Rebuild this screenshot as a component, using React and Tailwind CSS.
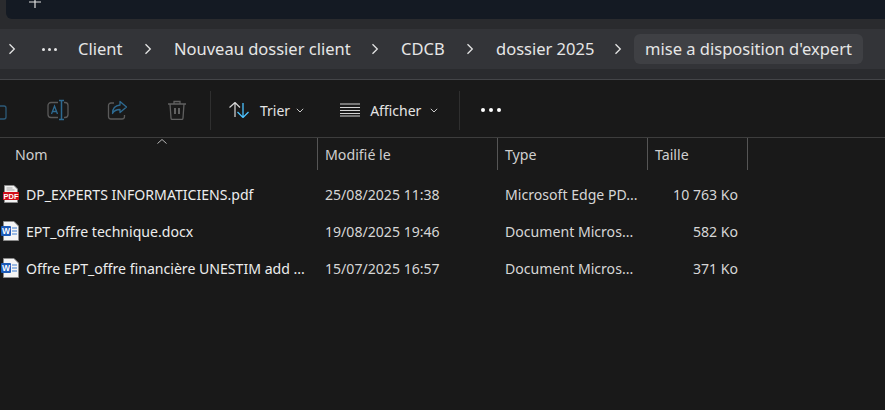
const font = { fontFamily: '"Noto Sans", sans-serif' };

function Chevron({ className = "" }) {
  return (
    <svg width="8" height="12" viewBox="0 0 8 12" fill="none" className={className}>
      <path d="M1.5 1.2 6.3 6 1.5 10.8" stroke="#e4e4e4" strokeWidth="1.3" />
    </svg>
  );
}

function Small({ className = "" }) {
  return (
    <svg width="8" height="5" viewBox="0 0 8 5" fill="none" className={className}>
      <path d="M.8.8 4 4 7.2.8" stroke="#c8c8c8" strokeWidth="1" />
    </svg>
  );
}

function PdfIcon() {
  return (
    <svg width="16" height="18" viewBox="0 0 16 18" className="ml-[2px]">
      <path d="M1.500.5h9.500l3.500 3.500v13.500H1.500z" fill="#f2f2f2" stroke="#8b8b8b" />
      <path d="M3.500 3h6M3.500 5h8" stroke="#a5a5a5" />
      <rect x="0" y="7" width="16" height="8" fill="#d00d1a" />
      <text x="8" y="13.600" textAnchor="middle" fontSize="7.500" fontWeight="700" fill="#fff" fontFamily="Liberation Sans, sans-serif">PDF</text>
    </svg>
  );
}

function WordIcon() {
  return (
    <svg width="18" height="20" viewBox="0 0 18 20">
      <path d="M2.500.5h10.500l4.500 4.500v14.500H2.500z" fill="#f5f5f5" stroke="#8b8b8b" />
      <path d="M11 7h5M11 10h5M11 13h5" stroke="#3f7fd1" strokeWidth="1.200" />
      <rect x="0" y="5" width="10" height="10" rx="1" fill="#1d5bb8" />
      <text x="5" y="13.200" textAnchor="middle" fontSize="8.500" fontWeight="700" fill="#fff" fontFamily="Liberation Sans, sans-serif">W</text>
    </svg>
  );
}

const crumbs = [
  ["Client", "w-[96px]"],
  ["Nouveau dossier client", "w-[227px]"],
  ["CDCB", "w-[95px]"],
  ["dossier 2025", "w-[148px]"],
];

const files = [
  { name: "DP_EXPERTS INFORMATICIENS.pdf", date: "25/08/2025 11:38", type: "Microsoft Edge PD...", size: "10 763 Ko", pdf: true },
  { name: "EPT_offre technique.docx", date: "19/08/2025 19:46", type: "Document Micros...", size: "582 Ko" },
  { name: "Offre EPT_offre financière UNESTIM add ...", date: "15/07/2025 16:57", type: "Document Micros...", size: "371 Ko" },
];

export default function App() {
  return (
    <div className="w-[885px] h-[410px] overflow-hidden bg-[#191919] text-[#e8e8e8]" style={font}>
      <div className="h-[19px] bg-[#2a2b2e] pl-[6px]">
        <div className="h-full bg-[#141a23] rounded-bl-[6px] overflow-hidden relative">
          <svg width="12" height="12" viewBox="0 0 12 12" className="absolute left-[23px] -top-[4px]">
            <path d="M6 0v12M0 6h12" stroke="#e0e0e0" strokeWidth="1.200" />
          </svg>
        </div>
      </div>

      <div className="h-[61px] bg-[#2a2b2e] pt-[10px] border-b border-[#444548]">
        <div className="h-[40px] bg-[#333438] flex items-center text-[16.5px] text-[#e6e6e6]">
          <Chevron className="ml-[8px] mr-[26px]" />
          <span className="w-[36px] flex gap-[3px] items-center">
            <i className="w-[3px] h-[3px] rounded-full bg-[#e6e6e6]" />
            <i className="w-[3px] h-[3px] rounded-full bg-[#e6e6e6]" />
            <i className="w-[3px] h-[3px] rounded-full bg-[#e6e6e6]" />
          </span>
          {crumbs.map(([label, w]) => (
            <span key={label} className={`${w} shrink-0 flex items-center justify-between pr-[22px] whitespace-nowrap`}>
              <span>{label}</span>
              <Chevron />
            </span>
          ))}
          <span className="ml-[-10px] h-[30px] w-[229px] flex items-center justify-center rounded-[6px] bg-[#3f4044] whitespace-nowrap">
            mise a disposition d'expert
          </span>
        </div>
      </div>

      <div className="h-[58px] pt-[3px] flex items-center border-b border-[#3d3d3d] text-[14px] text-[#e4e4e4]">
        <svg width="22" height="22" viewBox="0 0 22 22" fill="none" className="-ml-[12px] mr-[37px] shrink-0">
          <rect x="4" y="7" width="14" height="13" rx="2" stroke="#2d5a78" strokeWidth="1.300" />
        </svg>
        <svg width="22" height="22" viewBox="0 0 22 22" fill="none" className="mr-[38px] shrink-0">
          <path d="M11 3.500H4a3 3 0 0 0-3 3v9a3 3 0 0 0 3 3h7M17 3.500h1a3 3 0 0 1 3 3v9a3 3 0 0 1-3 3h-1" stroke="#5a5a5a" strokeWidth="1.300" />
          <path d="M4.500 15l3-8 3 8M5.500 12.500h4" stroke="#2e6a91" strokeWidth="1.300" />
          <path d="M12 1.500h5M14.500 1.500v19M12 20.500h5" stroke="#2e6a91" strokeWidth="1.500" />
        </svg>
        <svg width="20" height="20" viewBox="0 0 20 20" fill="none" className="mr-[41px] shrink-0">
          <path d="M7 3H4a2.500 2.500 0 0 0-2.500 2.500v11A2.500 2.500 0 0 0 4 19h11a2.500 2.500 0 0 0 2.500-2.500V15" stroke="#5a5a5a" strokeWidth="1.300" />
          <path d="M13 1.500 19.500 7 13 12.500V9.500c-3.500 0-6 1-7.500 4 0-5 3-8 7.500-8.500z" stroke="#2e6a91" strokeWidth="1.300" strokeLinejoin="round" />
        </svg>
        <svg width="18" height="20" viewBox="0 0 18 20" fill="none" className="mr-[24px] shrink-0">
          <path d="M0 4h18M6 4V1.500h6V4M2 4l1 14a1.500 1.500 0 0 0 1.500 1.500h9A1.500 1.500 0 0 0 15 18l1-14" stroke="#606060" strokeWidth="1.300" />
          <path d="M7 8v6M11 8v6" stroke="#606060" strokeWidth="2" />
        </svg>
        <div className="w-px h-[39px] bg-[#2f2f2f] mr-[18px]" />
        <svg width="20" height="16" viewBox="0 0 20 16" fill="none" className="mr-[11px] shrink-0">
          <path d="M.5 5.500 6 .5l5 5M6 .5V15" stroke="#d8d8d8" strokeWidth="1.200" />
          <path d="M8.500 10l5.500 5.500 5.500-5.500M14 15.500V1" stroke="#4cc2ff" strokeWidth="1.300" />
        </svg>
        <span className="mr-[6px]">Trier</span>
        <Small className="mr-[36px]" />
        <svg width="20" height="14" viewBox="0 0 20 14" fill="none" className="mr-[10px] shrink-0">
          <path d="M0 1h20M0 4.500h20M0 7.500h20M0 10.500h20M0 13h20" stroke="#d4d4d4" />
        </svg>
        <span className="mr-[9px]">Afficher</span>
        <Small className="mr-[21px]" />
        <div className="w-px h-[39px] bg-[#2f2f2f] mr-[21px]" />
        <span className="flex gap-[4px]">
          <i className="w-[4px] h-[4px] rounded-full bg-white" />
          <i className="w-[4px] h-[4px] rounded-full bg-white" />
          <i className="w-[4px] h-[4px] rounded-full bg-white" />
        </span>
      </div>

      <div className="grid grid-cols-[318px_180px_150px_100px] w-[748px] h-[32px] text-[14.2px] text-[#cfcfcf]">
        <div className="relative border-r border-[#555] pl-[15px] pt-[6px]">
          Nom
          <svg width="10" height="5" viewBox="0 0 10 5" fill="none" className="absolute left-[157px] top-[1px]">
            <path d="M.5 4.500 5 .5l4.500 4" stroke="#b8b8b8" />
          </svg>
        </div>
        <div className="border-r border-[#555] pl-[7px] pt-[6px]">Modifié le</div>
        <div className="border-r border-[#555] pl-[7px] pt-[6px]">Type</div>
        <div className="border-r border-[#555] pl-[7px] pt-[6px]">Taille</div>
      </div>

      <div className="pt-[6px] text-[14.1px] text-[#d6d6d6]">
        {files.map((f) => (
          <div key={f.name} className="grid grid-cols-[318px_180px_150px_90px] w-[738px] h-[37px] items-center whitespace-nowrap">
            <div className="flex items-center text-[#ededed]">
              <span className="w-[26px] shrink-0 pl-[1px]">{f.pdf ? <PdfIcon /> : <WordIcon />}</span>
              <span>{f.name}</span>
            </div>
            <div className="pl-[7px]">{f.date}</div>
            <div className="pl-[7px]">{f.type}</div>
            <div className="text-right">{f.size}</div>
          </div>
        ))}
      </div>
    </div>
  );
}
